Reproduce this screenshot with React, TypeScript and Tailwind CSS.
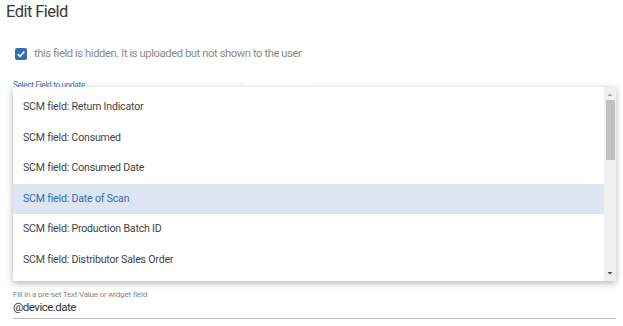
import React from 'react';

const items = [
  'SCM field: Return Indicator',
  'SCM field: Consumed',
  'SCM field: Consumed Date',
  'SCM field: Date of Scan',
  'SCM field: Production Batch ID',
  'SCM field: Distributor Sales Order',
];

const App = () => {
  return (
    <div className="relative w-[623px] h-[326px] bg-white overflow-hidden font-['Roboto',sans-serif]">
      <h1 className="pl-[6px] pt-[1px] h-[36px] text-[16.5px] leading-[22px] tracking-[-0.55px] text-[#383838]">Edit Field</h1>

      <label className="flex items-center gap-[7px] pl-[15px] h-[36px]">
        <span className="w-[12px] h-[12px] rounded-[2px] bg-[#2f6fba] flex items-center justify-center">
          <svg width="10" height="10" viewBox="0 0 10 10">
            <path d="M1.8 5.2 L4 7.3 L8.3 2.6" stroke="#fff" strokeWidth="1.6" fill="none" />
          </svg>
        </span>
        <span className="text-[11.2px] tracking-[-0.4px] text-[#8a8a8a]">this field is hidden. It is uploaded but not shown to the user</span>
      </label>

      <div className="relative pl-[13px] pr-[7px] mt-[8px]">
        <div className="text-[8.2px] leading-[10px] tracking-[-0.3px] text-[#3b73c4]">Select Field to update</div>
        <div className="absolute left-[245px] top-[-4px] w-[65px] h-[9px] bg-white z-20" />
        <div className="relative z-10 -mt-[3px] flex h-[194px] bg-white shadow-[0_2px_7px_rgba(0,0,0,0.3)]">
          <ul className="flex-1 pt-[5px]">
            {items.map((it, i) => (
              <li
                key={it}
                className={`h-[30.5px] flex items-center pl-[10px] text-[10.6px] tracking-[-0.2px] ${i === 3 ? 'bg-[#dce5f1] text-[#3a6cab]' : 'text-[#444]'}`}
              >
                {it}
              </li>
            ))}
          </ul>
          <div className="w-[12px] bg-[#f0f0f0] flex flex-col items-center">
            <svg width="8" height="12" viewBox="0 0 8 12" className="mt-[1px]">
              <path d="M1.5 8 L4 5.5 L6.5 8 Z" fill="#a3a3a3" />
            </svg>
            <div className="w-[9px] h-[60px] bg-[#c1c1c1]" />
            <div className="flex-1" />
            <svg width="8" height="12" viewBox="0 0 8 12" className="mb-[1px]">
              <path d="M1.5 4 L4 6.5 L6.5 4 Z" fill="#505050" />
            </svg>
          </div>
        </div>
      </div>

      <div className="pl-[13px] pr-[7px] mt-[9px]">
        <div className="text-[8px] leading-[9px] tracking-[-0.2px] text-[#888]">Fill in a pre-set Text Value or widget field</div>
        <div className="text-[11.5px] leading-[16px] tracking-[-0.5px] text-[#333] pb-[3px] border-b border-[#bdbdbd]">@device.date</div>
      </div>

      <svg className="absolute left-[165px] top-[143px]" width="44" height="34" viewBox="0 0 44 34">
        <line x1="38" y1="4" x2="11" y2="25" stroke="#e8191c" strokeWidth="1.8" />
        <path d="M5 30 L9.5 21.5 L14.5 27.5 Z" fill="#e8191c" />
      </svg>
    </div>
  );
};

export default App;
